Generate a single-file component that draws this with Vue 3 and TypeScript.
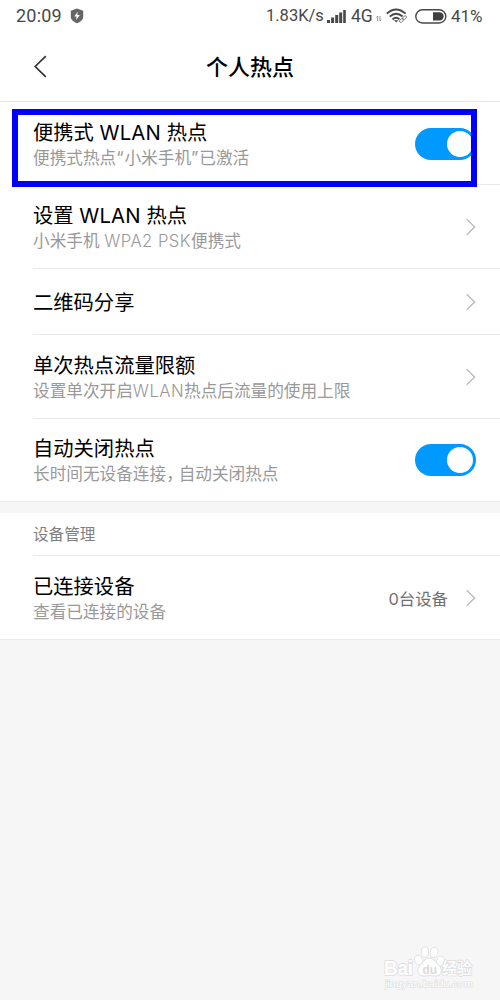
<script setup lang="ts">
interface Row {
  title: string
  sub?: string
  kind: 'switch' | 'link'
  value?: string
  size: string
  marked?: boolean
}

const rows: Row[] = [
  { title: '便携式 WLAN 热点', sub: '便携式热点“小米手机”已激活', kind: 'switch', size: 'first', marked: true },
  { title: '设置 WLAN 热点', sub: '小米手机 WPA2 PSK便携式', kind: 'link', size: 'tall' },
  { title: '二维码分享', kind: 'link', size: 'short' },
  { title: '单次热点流量限额', sub: '设置单次开启WLAN热点后流量的使用上限', kind: 'link', size: 'medium' },
  { title: '自动关闭热点', sub: '长时间无设备连接，自动关闭热点', kind: 'switch', size: 'last' },
]
const deviceRows: Row[] = [
  { title: '已连接设备', sub: '查看已连接的设备', kind: 'link', value: '0台设备', size: 'tall' },
]
const groups = [
  { name: '', rows },
  { name: '设备管理', rows: deviceRows },
]

// Splits out Latin words and commas, which carry their own spacing.
const pieces = (s: string) =>
  s.split(/(，|[“”]|[A-Z][A-Z0-9 ]*)/).filter(Boolean).map((text) => ({
    text,
    cls: text === '，' ? 'comma' : /[“”]/.test(text) ? 'quote' : /^[A-Z]/.test(text) ? 'latin' : '',
  }))
</script>

<template>
  <main class="screen">
    <div class="status">
      <span class="clock">20:09</span>
      <svg class="shield" width="14" height="16" viewBox="0 0 14 16">
        <path d="M7 .6 13.200 2.800V9c0 3-3.200 5-6.200 6.300C4 14 .8 12 .8 9V2.800Z" fill="#666" />
        <path d="M7.600 3.800 4.400 8.600h2.200L6.200 12l3.600-5H7.400Z" fill="#fff" />
      </svg>
      <span class="speed">1.83K/s</span>
      <svg class="signal" width="20" height="15" viewBox="0 0 20 15" fill="#484848">
        <rect x="0" y="11" width="3" height="3" /><rect x="4.100" y="8.500" width="3" height="5.500" />
        <rect x="8.200" y="6" width="3" height="8" /><rect x="12.200" y="3.500" width="3" height="10.500" />
        <rect x="16.200" y="1" width="2.600" height="13" />
      </svg>
      <span class="net">4G</span>
      <svg class="updown" width="6" height="7" viewBox="0 0 6 7" fill="none" stroke="#8a8a8a" stroke-width=".9">
        <path d="M1.700 6V1L.4 2.500M4 1v5l1.400-1.500" />
      </svg>
      <svg class="wifi" width="23" height="16" viewBox="0 0 23 16" fill="none" stroke="#484848" stroke-width="1.900">
        <path d="M.8 5.600Q10 -2.700 19.600 5.600M3.700 8.600Q10 3 16.700 8.600M6.600 11.500Q10 8.200 13.600 11.500" />
        <path d="M8 12.300h4.400L10.200 14.500Z" fill="#484848" stroke="none" />
        <path d="m14.200 13 5.300-4.600" stroke="#fff" stroke-width="3.400" />
        <g stroke="#777" stroke-width=".9" transform="rotate(-42 17 11)">
          <rect x="12.600" y="9.800" width="4.800" height="2.600" rx="1.300" /><rect x="16.400" y="9.800" width="4.800" height="2.600" rx="1.300" />
        </g>
      </svg>
      <svg class="battery" width="32" height="15" viewBox="0 0 32 15">
        <rect x=".8" y=".8" width="30" height="13.200" rx="6.600" fill="none" stroke="#484848" stroke-width="1.400" />
        <path d="M18 3.200h6.500a4.200 4.200 0 0 1 0 8.400H18Z" fill="#404040" />
      </svg>
      <span class="percent">41%</span>
    </div>

    <header class="bar">
      <svg class="back" width="14" height="24" viewBox="0 0 14 24">
        <path d="M12.800 1.200 2.200 11.500l10.600 10.300" fill="none" stroke="#333" stroke-width="1.700" />
      </svg>
      <h1>个人热点</h1>
    </header>

    <section v-for="g in groups" :key="g.name" class="group">
      <h2 v-if="g.name">{{ g.name }}</h2>
      <div v-for="r in g.rows" :key="r.title" class="row" :class="[r.size, { marked: r.marked }]">
        <div class="text">
          <div class="title"><span v-for="(p, i) in pieces(r.title)" :key="i" :class="p.cls">{{ p.text }}</span></div>
          <div v-if="r.sub" class="sub"><span v-for="(p, i) in pieces(r.sub)" :key="i" :class="p.cls">{{ p.text }}</span></div>
        </div>
        <span v-if="r.value" class="value">{{ r.value }}</span>
        <span v-if="r.kind === 'switch'" class="switch"><i></i></span>
        <svg v-else class="chevron" width="11" height="18" viewBox="0 0 11 18">
          <path d="M1.700 1.300 9.700 9l-8 7.700" fill="none" stroke="#b8b8b8" stroke-width="1.300" />
        </svg>
      </div>
    </section>

    <svg class="watermark" width="96" height="48" viewBox="0 0 96 48">
      <g fill="#fff" stroke="#e0e0e0" stroke-width="1.800" paint-order="stroke" stroke-linejoin="round">
        <text x="2" y="30.500" class="brand" textLength="29" lengthAdjust="spacingAndGlyphs">Bai</text>
        <ellipse cx="36.500" cy="16" rx="3.300" ry="4.300" transform="rotate(-18 36.500 16)" />
        <ellipse cx="43" cy="8" rx="3.300" ry="4.800" />
        <ellipse cx="52" cy="8.500" rx="3.300" ry="4.800" transform="rotate(12 52 8.500)" />
        <ellipse cx="58.300" cy="17" rx="3.200" ry="4.500" transform="rotate(18 58.300 17)" />
        <path d="M47.500 14.500c4 0 6 4 9.500 7.500 3.500 3.500 2 10-3.500 9.500-4-.5-7-.5-11 0-6 .5-8-5.500-4.500-9.500C41.500 18.500 43 14.500 47.500 14.500Z" />
        <text x="60" y="30" class="cjk" textLength="30" lengthAdjust="spacingAndGlyphs">经验</text>
        <text x="3" y="42.500" class="site" textLength="88" lengthAdjust="spacingAndGlyphs">jingyan.baidu.com</text>
      </g>
      <text x="40.500" y="29.500" class="du">du</text>
    </svg>
  </main>
</template>

<style>
body {
  margin: 0;
  background: #f6f6f6;
}
</style>

<style scoped>
.screen {
  position: relative;
  width: 500px;
  height: 1000px;
  overflow: hidden;
  background: #f6f6f6;
  font-family: Inter, 'Noto Sans CJK SC', sans-serif;
  color: #000;
}
.status {
  display: flex;
  align-items: center;
  box-sizing: border-box;
  height: 32px;
  padding-left: 16px;
  background: #fff;
  font-family: Roboto, sans-serif;
  font-size: 17.500px;
  line-height: 32px;
  color: #484848;
  white-space: nowrap;
}
.status > * { flex: none; }
.clock { width: 54px; font-size: 18px; letter-spacing: .2px; }
.shield { margin-right: 182px; }
.speed { width: 61px; font-size: 16.500px; }
.signal { width: 20px; }
.net { width: 27px; margin-left: 4px; }
.updown { margin: 5px 4px 0 -2px; }
.wifi { margin-right: 6px; }
.battery { margin-right: 4px; }
.percent { font-size: 17px; }
.bar {
  display: grid;
  grid-template-columns: 33px 14px 1fr 47px;
  align-items: center;
  box-sizing: border-box;
  height: 70px;
  border-bottom: 1px solid #e6e6e6;
  background: #fff;
}
.back { grid-column: 2; }
h1 {
  margin: 0;
  font-size: 22px;
  line-height: 32px;
  font-weight: 500;
  text-align: center;
}
.group { background: #fff; border-bottom: 1px solid #ebebeb; }
.group + .group { margin-top: 11px; }
h2 {
  box-sizing: border-box;
  height: 42px;
  margin: 0;
  padding-left: 33px;
  font-size: 15.600px;
  line-height: 43px;
  font-weight: 400;
  color: #808080;
}
.row {
  position: relative;
  display: flex;
  align-items: center;
  box-sizing: border-box;
  padding: 1px 24px 0 33px;
}
.row.first { height: 82px; padding-top: 2px; }
.row.tall { height: 84px; padding-top: 2px; }
.row.short { height: 66px; padding-top: 2px; }
.row.medium { height: 84px; padding-top: 2px; }
.row.last { height: 83px; }
.row + .row::before,
h2 + .row::before {
  content: '';
  position: absolute;
  top: 0;
  left: 33px;
  right: 0;
  height: 1px;
  background: #e8e8e8;
}
.text { flex: 1; padding-top: 2px; white-space: nowrap; }
.title { font-size: 20.300px; line-height: 26px; }
.title .latin { letter-spacing: .15px; }
.sub { font-size: 16.650px; line-height: 24px; color: #999; }
.sub .latin { font-weight: 300; letter-spacing: .45px; }
.sub .quote { letter-spacing: .9px; }
.sub .comma { margin-right: 4.200px; font-feature-settings: 'halt'; }
.value { margin-right: 17px; font-size: 16.400px; color: #707070; }
.switch {
  box-sizing: border-box;
  width: 61px;
  height: 32px;
  padding: 3px;
  border-radius: 16px;
  background: #0099ff;
}
.switch i {
  display: block;
  width: 26px;
  height: 26px;
  margin-left: auto;
  border-radius: 50%;
  background: #fff;
}
.marked::after {
  content: '';
  position: absolute;
  z-index: 1;
  top: 7px;
  left: 12px;
  box-sizing: border-box;
  width: 465px;
  height: 78px;
  border: 6px solid #0000ff;
}
.watermark { position: absolute; left: 382px; top: 944px; }
.brand { font-family: 'Liberation Sans', sans-serif; font-size: 20px; font-weight: 700; }
.cjk { font-family: 'Noto Sans CJK SC', sans-serif; font-size: 16px; font-weight: 500; }
.site { font-family: 'Liberation Sans', sans-serif; font-size: 9px; stroke-width: 1.200px; }
.du { font-family: 'Liberation Sans', sans-serif; font-size: 12px; font-weight: 700; fill: #dadada; }
</style>
